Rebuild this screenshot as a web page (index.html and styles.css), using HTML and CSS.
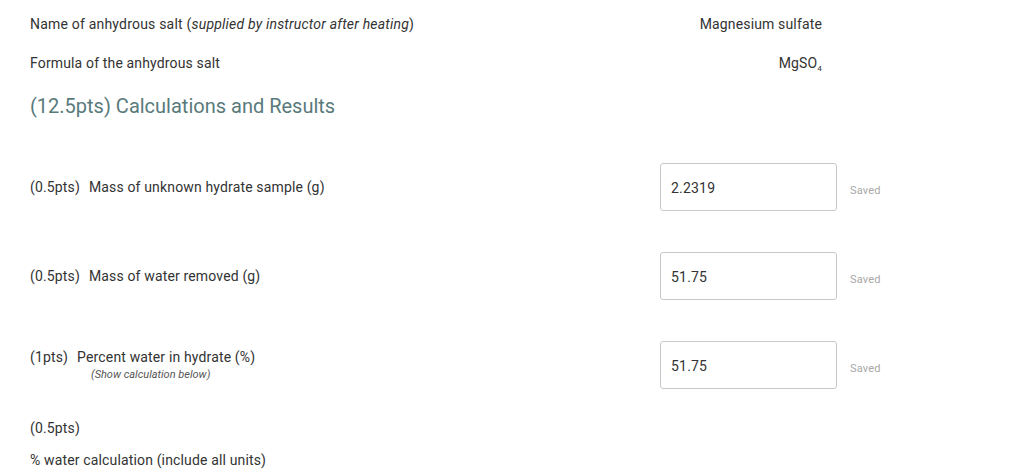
FILE: index.html
```html
<!DOCTYPE html>
<html>
<head>
<meta charset="utf-8">
<link rel="stylesheet" href="styles.css">
</head>
<body>
<main class="page">
  <div class="info-row first">
    <div class="label">Name of anhydrous salt (<em>supplied by instructor after heating</em>)</div>
    <div class="value">Magnesium sulfate</div>
  </div>
  <div class="info-row second">
    <div class="label">Formula of the anhydrous salt</div>
    <div class="value">MgSO<sub>4</sub></div>
  </div>
  <h2 class="section-title">(12.5pts) Calculations and Results</h2>

  <div class="q-row q1">
    <div class="label"><span class="pts">(0.5pts)</span>Mass of unknown hydrate sample (g)</div>
    <input class="answer" type="text" value="2.2319">
    <div class="status">Saved</div>
  </div>
  <div class="q-row q2">
    <div class="label"><span class="pts">(0.5pts)</span>Mass of water removed (g)</div>
    <input class="answer" type="text" value="51.75">
    <div class="status">Saved</div>
  </div>
  <div class="q-row q3">
    <div class="label">
      <div><span class="pts">(1pts)</span>Percent water in hydrate (%)</div>
      <div class="hint">(Show calculation below)</div>
    </div>
    <input class="answer" type="text" value="51.75">
    <div class="status">Saved</div>
  </div>

  <div class="plain pts-line">(0.5pts)</div>
  <div class="plain calc-line">% water calculation (include all units)</div>
</main>
</body>
</html>
```

FILE: styles.css
```css
html, body {
  margin: 0;
  padding: 0;
  background: #ffffff;
}
body {
  font-family: Roboto, "Noto Sans", Arial, sans-serif;
  font-size: 14px;
  letter-spacing: 0.15px;
  color: #333333;
}
.page {
  width: 1024px;
  height: 471px;
  overflow: hidden;
  padding-left: 30px;
  box-sizing: border-box;
}
.info-row {
  display: grid;
  grid-template-columns: 630px 162px;
  line-height: 20px;
}
.info-row.first { margin-top: 14px; }
.info-row.second { margin-top: 19px; }
.info-row.first .label { letter-spacing: 0.2px; }
.info-row .value {
  text-align: right;
}
.info-row sub {
  font-size: 8px;
  vertical-align: -3px;
  line-height: 0;
}
.section-title {
  margin: 19px 0 0 0;
  font-size: 20px;
  line-height: 28px;
  font-weight: 400;
  letter-spacing: 0;
  color: #597a7b;
}
.q-row {
  display: grid;
  grid-template-columns: 630px 177px auto;
  align-items: center;
  height: 48px;
  line-height: 20px;
}
.q1 { margin-top: 43px; }
.q2 { margin-top: 41px; }
.q3 { margin-top: 41px; }
.pts {
  margin-right: 9px;
}
.hint {
  font-size: 11px;
  font-style: italic;
  line-height: 16px;
  letter-spacing: 0;
  color: #555555;
  padding-left: 61px;
}
.answer {
  box-sizing: border-box;
  width: 177px;
  height: 48px;
  border: 1px solid #c9c9c9;
  border-radius: 3px;
  padding: 2px 0 0 10px;
  margin: 0;
  font-family: Roboto, "Noto Sans", Arial, sans-serif;
  font-size: 14px;
  letter-spacing: 0.2px;
  color: #333333;
  background: #ffffff;
  outline: none;
}
.status {
  padding-left: 13px;
  padding-top: 7px;
  font-size: 11px;
  color: #a8a8a8;
}
.plain {
  line-height: 20px;
}
.pts-line { margin-top: 29px; }
.calc-line { margin-top: 12px; }
```
